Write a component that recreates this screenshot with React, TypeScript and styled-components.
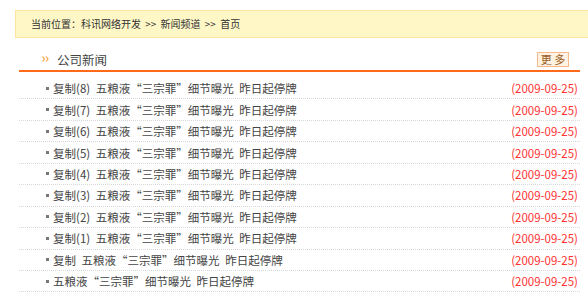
import React from 'react'
import styled, { createGlobalStyle } from 'styled-components'

const GlobalStyle = createGlobalStyle`
    body {
        margin: 0;
        background: #fff;
        font-family: "Noto Sans CJK SC", "Liberation Sans", sans-serif;
        font-size: 12px;
        color: #333;
    }
`

const news = [
    '复制(8) 五粮液“三宗罪”细节曝光 昨日起停牌',
    '复制(7) 五粮液“三宗罪”细节曝光 昨日起停牌',
    '复制(6) 五粮液“三宗罪”细节曝光 昨日起停牌',
    '复制(5) 五粮液“三宗罪”细节曝光 昨日起停牌',
    '复制(4) 五粮液“三宗罪”细节曝光 昨日起停牌',
    '复制(3) 五粮液“三宗罪”细节曝光 昨日起停牌',
    '复制(2) 五粮液“三宗罪”细节曝光 昨日起停牌',
    '复制(1) 五粮液“三宗罪”细节曝光 昨日起停牌',
    '复制 五粮液“三宗罪”细节曝光 昨日起停牌',
    '五粮液“三宗罪”细节曝光 昨日起停牌',
]

export default function App() {
    return (
        <Page>
            <GlobalStyle />
            <Crumbs>当前位置：科讯网络开发 &gt;&gt; 新闻频道 &gt;&gt; 首页</Crumbs>
            <Section>
                <Header>
                    <Arrows>
                        <svg width="7" height="6" viewBox="0 0 7 6">
                            <path d="M0.5 0.5 L2.5 3 L0.5 5.5 M4 0.5 L6 3 L4 5.5" fill="none" stroke="#f3a23a" strokeWidth="1.2" />
                        </svg>
                    </Arrows>
                    <SectionTitle>公司新闻</SectionTitle>
                    <More>更 多</More>
                </Header>
                <List>
                    {news.map((title, i) => (
                        <Row key={i}>
                            <Bullet />
                            <Title>{title}</Title>
                            <Date>(2009-09-25)</Date>
                        </Row>
                    ))}
                </List>
            </Section>
        </Page>
    )
}

const Page = styled.div`
    width: 588px;
    height: 299px;
    overflow: hidden;
`
const Crumbs = styled.div`
    margin: 10px 0 0 15px;
    height: 26px;
    line-height: 26px;
    padding-left: 15px;
    background: #fff8c6;
    border: 1px solid #ffe4a0;
    border-right: none;
    font-size: 10px;
    word-spacing: 2px;
    color: #333;
`
const Section = styled.section`
    margin: 0 8px 0 19px;
`
const Header = styled.div`
    display: flex;
    align-items: center;
    height: 20px;
    margin-top: 11px;
    padding: 0 11px 1px 23px;
    border-bottom: 2px solid #ff6a1a;
`
const Arrows = styled.span`
    display: flex;
    margin-right: 8px;
`
const SectionTitle = styled.h2`
    margin: 0;
    flex: 1;
    font-size: 12.5px;
    font-weight: normal;
    color: #444;
`
const More = styled.span`
    width: 30px;
    height: 13px;
    line-height: 13px;
    text-align: center;
    font-size: 11px;
    color: #9a5a20;
    background: #fff2e2;
    border: 1px solid #f8b98a;
`
const List = styled.ul`
    list-style: none;
    margin: 0;
    padding: 6px 0 0;
`
const Row = styled.li`
    display: flex;
    align-items: center;
    height: 20.44px;
    padding: 0 2px 0 27px;
    border-bottom: 1px dotted #d8d8d8;
`
const Bullet = styled.span`
    width: 3px;
    height: 3px;
    margin-right: 4px;
    background: #777;
`
const Title = styled.span`
    flex: 1;
    font-size: 11.5px;
    word-spacing: 3px;
    color: #444;
`
const Date = styled.span`
    color: #f33;
    font-size: 11.5px;
`
